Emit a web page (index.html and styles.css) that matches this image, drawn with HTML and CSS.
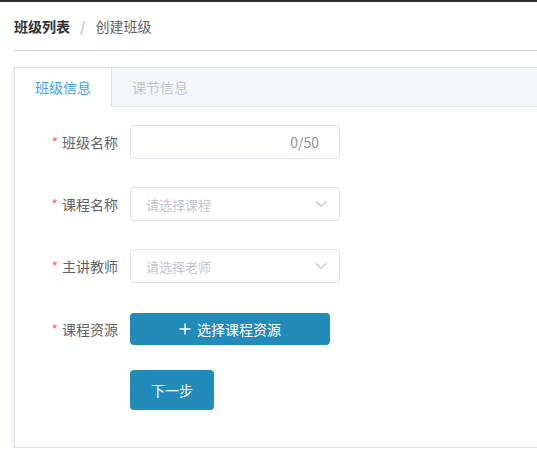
FILE: index.html
```html
<!DOCTYPE html>
<html lang="zh">
<head>
<meta charset="utf-8">
<title>创建班级</title>
<link rel="stylesheet" href="styles.css">
</head>
<body>
<div class="topbar"></div>
<main class="page">
  <nav class="breadcrumb">
    <span class="crumb-link">班级列表</span>
    <span class="crumb-sep">/</span>
    <span class="crumb-current">创建班级</span>
  </nav>
  <section class="card">
    <div class="tabs">
      <div class="tab tab-active">班级信息</div>
      <div class="tab tab-disabled">课节信息</div>
    </div>
    <div class="tab-body">
      <div class="form-item row-input">
        <label class="label"><span class="req">*</span>班级名称</label>
        <div class="input">
          <span class="input-text"></span>
          <span class="count">0/50</span>
        </div>
      </div>
      <div class="form-item row-input">
        <label class="label"><span class="req">*</span>课程名称</label>
        <div class="input select">
          <span class="placeholder">请选择课程</span>
          <svg class="arrow" width="12" height="8" viewBox="0 0 12 8"><path d="M1 1.5 L6 6.5 L11 1.5" fill="none" stroke="#c0c4cc" stroke-width="1.2"/></svg>
        </div>
      </div>
      <div class="form-item row-input row-last-input">
        <label class="label"><span class="req">*</span>主讲教师</label>
        <div class="input select">
          <span class="placeholder">请选择老师</span>
          <svg class="arrow" width="12" height="8" viewBox="0 0 12 8"><path d="M1 1.5 L6 6.5 L11 1.5" fill="none" stroke="#c0c4cc" stroke-width="1.2"/></svg>
        </div>
      </div>
      <div class="form-item row-resource">
        <label class="label"><span class="req">*</span>课程资源</label>
        <button class="btn btn-resource"><svg class="plus" width="12" height="12" viewBox="0 0 12 12"><path d="M6 0.5 V11.5 M0.5 6 H11.5" stroke="#fff" stroke-width="1.4"/></svg>选择课程资源</button>
      </div>
      <div class="form-item row-next">
        <span class="label"></span>
        <button class="btn btn-next">下一步</button>
      </div>
    </div>
  </section>
</main>
</body>
</html>
```

FILE: styles.css
```css
html, body {
  margin: 0;
  padding: 0;
  background: #fff;
}
body {
  font-family: "Noto Sans CJK SC", "Noto Sans", sans-serif;
  font-size: 14px;
  color: #606266;
}
.topbar {
  height: 2px;
  background: #2c2c2c;
}
.page {
  padding-left: 14px;
}
.breadcrumb {
  height: 48px;
  display: flex;
  align-items: center;
  border-bottom: 1px solid #d2d2d2;
  line-height: 1;
}
.crumb-link {
  font-weight: 700;
  color: #303133;
}
.crumb-sep {
  margin: 0 10px;
  color: #c0c4cc;
  font-weight: 700;
}
.crumb-current {
  color: #606266;
}
.card {
  margin-top: 16px;
  border: 1px solid #dcdfe6;
  border-right: none;
  background: #fff;
  box-shadow: 0 2px 4px 0 rgba(0,0,0,.12), 0 0 6px 0 rgba(0,0,0,.04);
}
.tabs {
  display: flex;
  height: 38px;
  background: #f5f7fa;
  border-bottom: 1px solid #e4e7ed;
}
.tab {
  padding: 0 20px;
  line-height: 38px;
  height: 39px;
}
.tab-active {
  background: #fff;
  color: #409eff;
  border-right: 1px solid #dcdfe6;
}
.tab-disabled {
  color: #c0c4cc;
}
.tab-body {
  padding: 18px 0 37px;
}
.form-item {
  display: flex;
  align-items: center;
}
.label {
  width: 103px;
  padding-right: 12px;
  text-align: right;
  color: #606266;
  box-sizing: content-box;
}
.req {
  color: #f56c6c;
  margin-right: 4px;
}
.row-input {
  height: 34px;
  margin-bottom: 28px;
}
.row-last-input {
  margin-bottom: 30px;
}
.input {
  width: 210px;
  height: 34px;
  box-sizing: border-box;
  border: 1px solid #dcdfe6;
  border-radius: 4px;
  display: flex;
  align-items: center;
  padding: 0 20px 0 15px;
}
.input-text {
  flex: 1;
}
.count {
  color: #909399;
  font-size: 14px;
}
.select {
  padding-right: 12px;
}
.placeholder {
  flex: 1;
  color: #c0c4cc;
  font-size: 13px;
}
.arrow {
  display: block;
}
.row-resource {
  height: 32px;
  margin-bottom: 25px;
}
.btn {
  border: none;
  border-radius: 4px;
  background: #218bb9;
  color: #fff;
  font-family: inherit;
  font-size: 14px;
  display: flex;
  align-items: center;
  justify-content: center;
  cursor: pointer;
  padding: 0;
}
.btn-resource {
  width: 200px;
  height: 32px;
}
.plus {
  margin-right: 6px;
}
.row-next {
  height: 40px;
}
.btn-next {
  width: 84px;
  height: 40px;
}
```
